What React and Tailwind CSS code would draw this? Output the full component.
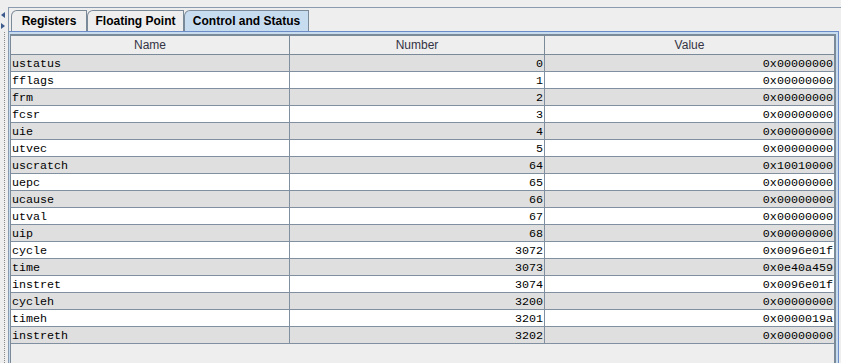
import React from 'react';

const rows = [
  ['ustatus', '0', '0x00000000'],
  ['fflags', '1', '0x00000000'],
  ['frm', '2', '0x00000000'],
  ['fcsr', '3', '0x00000000'],
  ['uie', '4', '0x00000000'],
  ['utvec', '5', '0x00000000'],
  ['uscratch', '64', '0x10010000'],
  ['uepc', '65', '0x00000000'],
  ['ucause', '66', '0x00000000'],
  ['utval', '67', '0x00000000'],
  ['uip', '68', '0x00000000'],
  ['cycle', '3072', '0x0096e01f'],
  ['time', '3073', '0x0e40a459'],
  ['instret', '3074', '0x0096e01f'],
  ['cycleh', '3200', '0x00000000'],
  ['timeh', '3201', '0x0000019a'],
  ['instreth', '3202', '0x00000000'],
];

const cols = 'grid grid-cols-[279px_255px_289px]';

const Tab = ({ label, active, width }) => (
  <div
    className={`flex h-[21px] items-center justify-center rounded-tl-[6px] border border-b-0 border-[#7a8a99] text-[12px] font-bold text-black ${
      active ? 'bg-[#c8dcf0]' : 'bg-[#eeeeee]'
    } ${width}`}
  >
    {label}
  </div>
);

export default function App() {
  return (
    <div
      className="flex h-[363px] w-[841px] overflow-hidden bg-[#eeeeee]"
      style={{ fontFamily: '"Liberation Sans", Arial, sans-serif' }}
    >
      {/* split pane handle */}
      <div className="flex w-[9px] flex-col items-start pt-[12px]">
        <div className="ml-[1px] h-0 w-0 border-y-[3px] border-r-[4px] border-y-transparent border-r-[#3c5a8c]" />
        <div className="mt-[5px] ml-[1px] h-0 w-0 border-y-[3px] border-l-[4px] border-y-transparent border-l-[#3c5a8c]" />
        <div className="mt-[3px] ml-[4px] flex-1 border-l border-dotted border-[#8a8a8a]" />
      </div>

      <div className="mt-[7px] flex flex-1 flex-col border-t border-l border-[#8a9bb0]">
        {/* tabs */}
        <div className="ml-[2px] flex pt-[2px]">
          <Tab label="Registers" width="w-[76px]" />
          <Tab label="Floating Point" width="w-[97px]" />
          <Tab label="Control and Status" width="w-[125px]" active />
        </div>

        {/* tab content */}
        <div className="mr-[2px] flex flex-1 flex-col border-t border-r border-[#6c8cc8] bg-[#c8dcf0] pt-[2px] pr-[2px] pl-[1px]">
          <div className="flex flex-1 flex-col border-t border-l border-r-2 border-[#7a8a99] bg-[#eeeeee]">
            {/* header */}
            <div className={`${cols} h-[20px] border-t border-b border-[#7a8a99] bg-[#eeeeee] text-[12px] leading-[14px] text-[#333344]`}>
              <div className="flex items-center justify-center border-r border-[#7a8a99]">Name</div>
              <div className="flex items-center justify-center border-r border-[#7a8a99]">Number</div>
              <div className="flex items-center justify-center">Value</div>
            </div>

            {/* rows */}
            <div style={{ fontFamily: '"Liberation Mono", "Courier New", monospace' }} className="text-[11.7px] leading-[13px] text-black">
              {rows.map(([name, num, val], i) => (
                <div
                  key={name}
                  className={`${cols} h-[17px] border-b border-[#8090a0] ${i % 2 === 0 ? 'bg-[#dfdfdf]' : 'bg-white'}`}
                >
                  <div className="flex items-center border-r border-[#8090a0] pt-[2px] pl-[1px]">{name}</div>
                  <div className="flex items-center justify-end border-r border-[#8090a0] pt-[2px] pr-[1px]">{num}</div>
                  <div className="flex items-center justify-end pt-[2px] pr-[1px]">{val}</div>
                </div>
              ))}
            </div>
          </div>
        </div>
      </div>
    </div>
  );
}
